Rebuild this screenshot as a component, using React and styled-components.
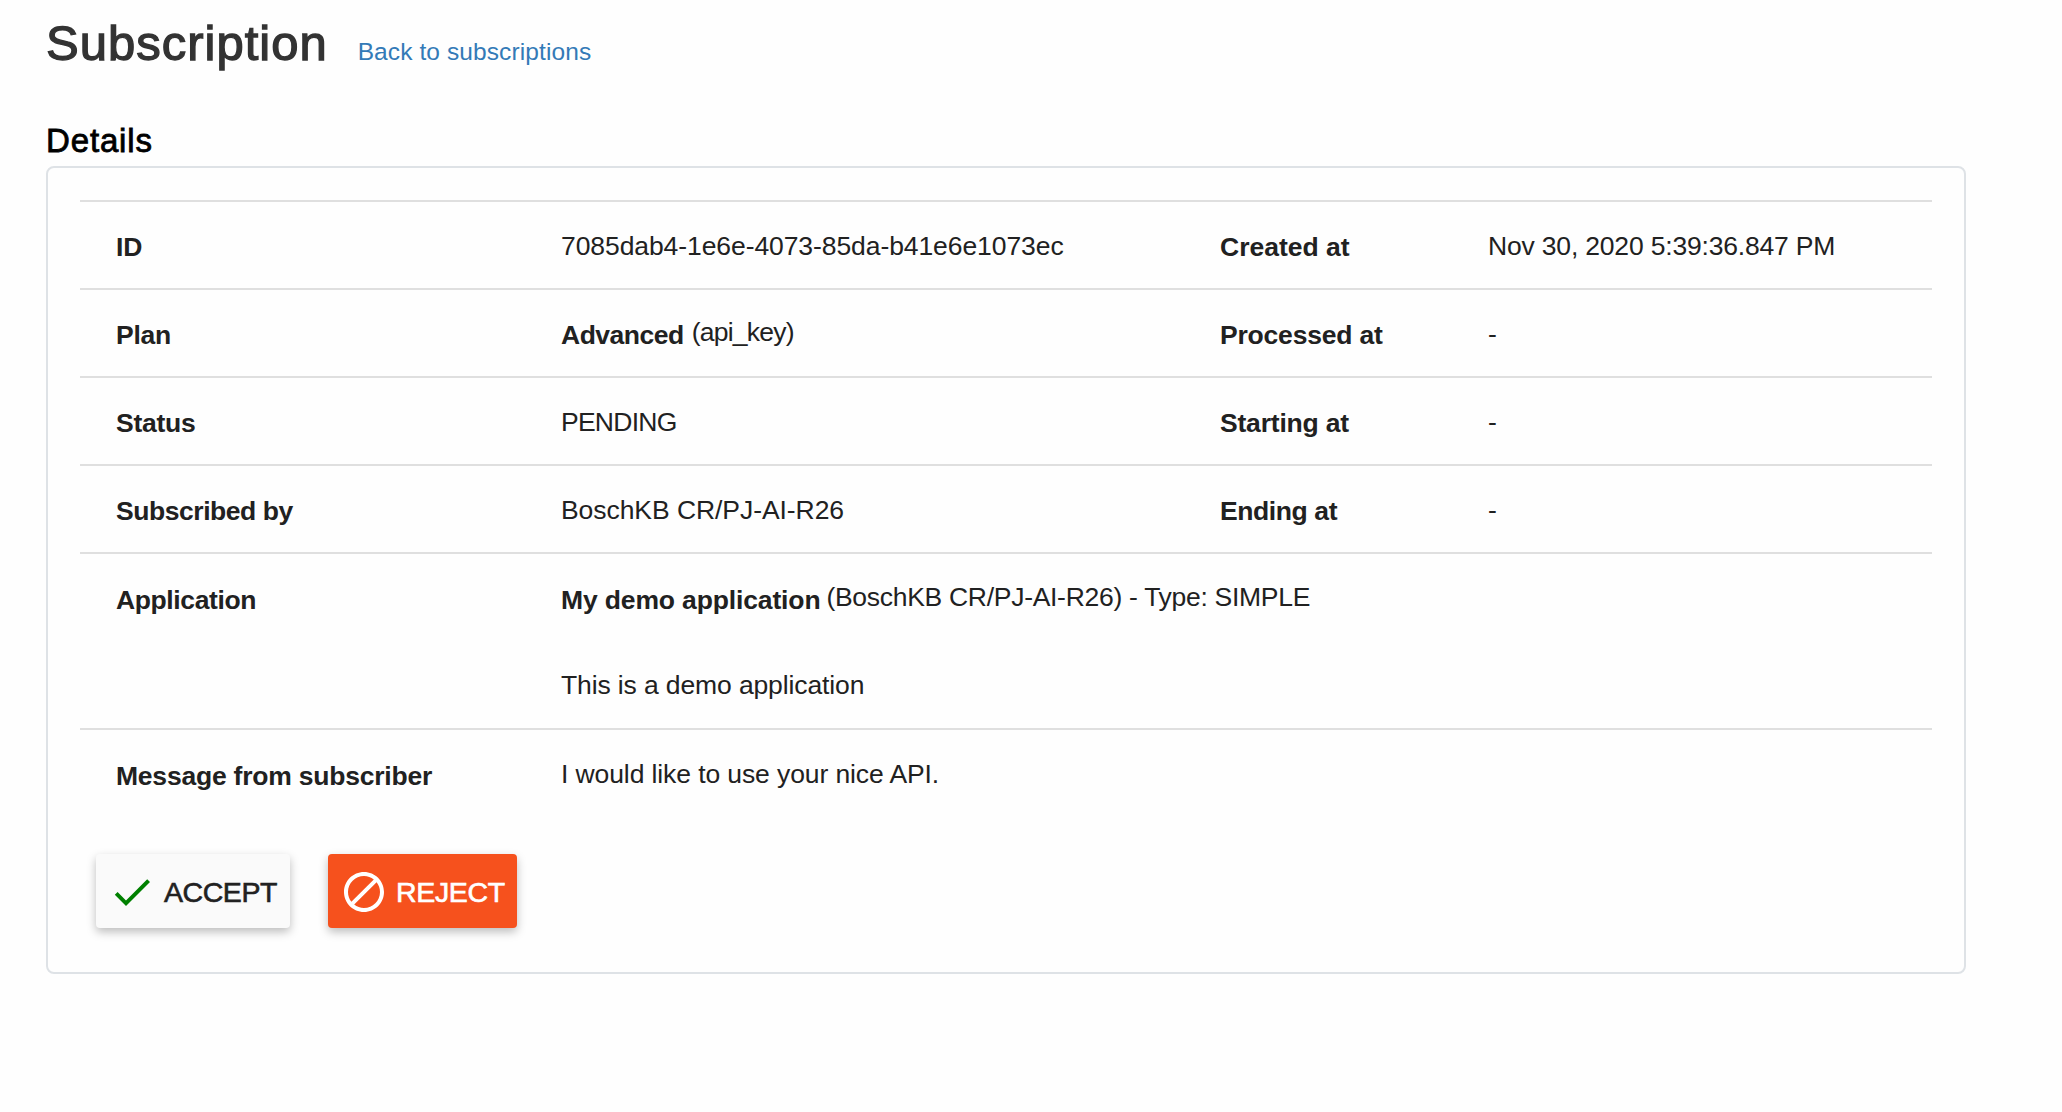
import React from "react";
import styled, { createGlobalStyle } from "styled-components";

const GlobalStyle = createGlobalStyle`
  *, *::before, *::after { box-sizing: border-box; }
  body {
    margin: 0;
    background: #fefefe;
    color: #212121;
    font-family: "Liberation Sans", Arial, sans-serif;
  }
`;

const Page = styled.main`
  padding: 13px 96px 0 46px;
`;

const Header = styled.header`
  display: flex;
  align-items: baseline;
  gap: 30px;
  height: 60px;
`;

const Title = styled.h1`
  margin: 0;
  color: #333;
  font-size: 49px;
  font-weight: 400;
  line-height: 60px;
  letter-spacing: 1px;
  -webkit-text-stroke: 1.3px #333;
`;

const BackLink = styled.a`
  color: #337ab7;
  font-size: 24.5px;
  letter-spacing: 0.1px;
  text-decoration: none;
`;

const SectionTitle = styled.h2`
  margin: 48px 0 5px;
  color: #000;
  font-size: 33px;
  font-weight: 400;
  line-height: 40px;
  letter-spacing: 0.85px;
  -webkit-text-stroke: 0.8px #000;
`;

const Card = styled.section`
  height: 808px;
  padding: 32px;
  border: 2px solid #dee2e6;
  border-radius: 8px;
`;

const Row = styled.div`
  display: grid;
  grid-template-columns: 445px 659px 268px 1fr;
  align-items: start;
  height: ${(p) => (p.$tall ? 176 : 88)}px;
  padding-left: 36px;
  border-top: 2px solid #dfdfdf;
`;

const Text = styled.span`
  font-size: 26.5px;
  line-height: 40px;
  white-space: nowrap;
  letter-spacing: ${(p) => p.$track || 0}px;
  margin-top: ${(p) => p.$top ?? 24}px;
`;

const Label = styled(Text)`
  font-weight: 700;
  margin-top: ${(p) => p.$top ?? 25}px;
`;

const Value = styled.div`
  display: flex;
  align-items: flex-start;
  gap: ${(p) => p.$gap || 0}px;
`;

const WideValue = styled.div`
  grid-column: 2 / -1;
  display: flex;
  flex-direction: column;
  align-items: flex-start;
`;

const Actions = styled.div`
  display: flex;
  gap: 38px;
  padding: 38px 16px 0;
`;

const Button = styled.button`
  display: flex;
  align-items: center;
  gap: 8px;
  width: ${(p) => p.$width}px;
  height: 74px;
  padding: 2px 0 0 12px;
  border: 0;
  border-radius: 4px;
  background: ${(p) => (p.$warn ? "#f6511d" : "#fafafa")};
  color: ${(p) => (p.$warn ? "#fff" : "#212121")};
  box-shadow: 0 4px 10px 0 rgba(0, 0, 0, 0.26);
  font-family: inherit;
  font-size: 28.5px;
  line-height: 40px;
  letter-spacing: ${(p) => p.$track}px;
  white-space: nowrap;
  -webkit-text-stroke: 0.6px currentColor;
`;

const Icon = styled.svg`
  flex: none;
  width: 48px;
  height: 48px;
  fill: ${(p) => p.$color};
  stroke: none;
`;

const details = [
  {
    label: ["ID", 0],
    value: ["7085dab4-1e6e-4073-85da-b41e6e1073ec", -0.08],
    dateLabel: ["Created at", 0],
    date: ["Nov 30, 2020 5:39:36.847 PM", -0.18],
  },
  {
    label: ["Plan", -0.3],
    strong: ["Advanced", -0.5],
    value: ["(api_key)", -0.75],
    dateLabel: ["Processed at", -0.2],
    date: ["-", 0],
  },
  {
    label: ["Status", -0.25],
    value: ["PENDING", -0.75],
    dateLabel: ["Starting at", -0.2],
    date: ["-", 0],
  },
  {
    label: ["Subscribed by", -0.45],
    value: ["BoschKB CR/PJ-AI-R26", -0.06],
    dateLabel: ["Ending at", -0.4],
    date: ["-", 0],
  },
];

export default function App() {
  return (
    <>
      <GlobalStyle />
      <Page>
        <Header>
          <Title>Subscription</Title>
          <BackLink>Back to subscriptions</BackLink>
        </Header>
        <SectionTitle>Details</SectionTitle>
        <Card>
          {details.map(({ label, strong, value, dateLabel, date }) => (
            <Row key={label[0]}>
              <Label $track={label[1]}>{label[0]}</Label>
              <Value $gap={8}>
                {strong && <Label $track={strong[1]}>{strong[0]}</Label>}
                <Text $track={value[1]} $top={strong ? 22 : 24}>{value[0]}</Text>
              </Value>
              <Label $track={dateLabel[1]}>{dateLabel[0]}</Label>
              <Text $track={date[1]}>{date[0]}</Text>
            </Row>
          ))}
          <Row $tall>
            <Label $top={26} $track={-0.38}>Application</Label>
            <WideValue>
              <Value $gap={6}>
                <Label $top={26} $track={-0.14}>My demo application</Label>
                <Text $top={23} $track={-0.29}>(BoschKB CR/PJ-AI-R26) - Type: SIMPLE</Text>
              </Value>
              <Text $top={45} $track={-0.12}>This is a demo application</Text>
            </WideValue>
          </Row>
          <Row>
            <Label $top={26} $track={-0.22}>Message from subscriber</Label>
            <WideValue>
              <Text $track={-0.1}>I would like to use your nice API.</Text>
            </WideValue>
          </Row>
          <Actions>
            <Button $width={194} $track={-0.44}>
              <Icon viewBox="0 0 24 24" $color="#008000">
                <path d="M9 16.2L4.8 12l-1.4 1.4L9 19 21 7l-1.4-1.4L9 16.2z" />
              </Icon>
              ACCEPT
            </Button>
            <Button $warn $width={189} $track={-0.35}>
              <Icon viewBox="0 0 24 24" $color="#fff">
                <path d="M12 2C6.48 2 2 6.48 2 12s4.48 10 10 10 10-4.48 10-10S17.52 2 12 2zM4 12c0-4.42 3.58-8 8-8 1.85 0 3.55.63 4.9 1.69L5.69 16.9C4.63 15.55 4 13.85 4 12zm8 8c-1.85 0-3.55-.63-4.9-1.69L18.31 7.1C19.37 8.45 20 10.15 20 12c0 4.42-3.58 8-8 8z" />
              </Icon>
              REJECT
            </Button>
          </Actions>
        </Card>
      </Page>
    </>
  );
}
